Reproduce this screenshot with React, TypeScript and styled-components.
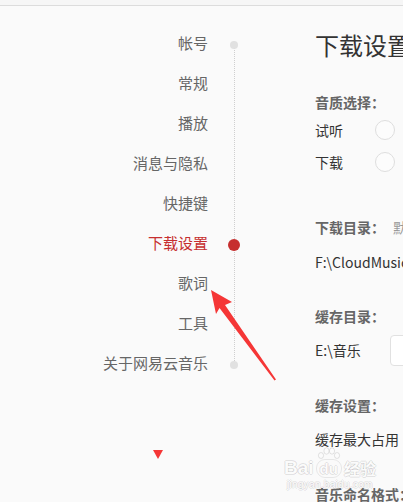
import React from "react";
import styled, { createGlobalStyle } from "styled-components";

const Global = createGlobalStyle`
  html, body { margin: 0; padding: 0; background: #fafafa; overflow: hidden; }
  body { font-family: "Noto Sans CJK SC", "Microsoft YaHei", sans-serif; }
  #root { width: 403px; height: 502px; }
`;

const Page = styled.div`
  position: relative;
  width: 403px;
  height: 502px;
  overflow: hidden;
  background: #fafafa;
`;

const TopBar = styled.div`
  height: 5px;
  background: #f6f6f6;
  border-bottom: 1px solid #dcdcdc;
`;

const Main = styled.div`
  display: flex;
  flex-direction: row;
  align-items: flex-start;
`;

const Nav = styled.nav`
  width: 208px;
  flex: none;
  padding-top: 17px;
  display: flex;
  flex-direction: column;
`;

const NavItem = styled.div<{ $active?: boolean }>`
  height: 40px;
  line-height: 40px;
  text-align: right;
  font-size: 15px;
  color: ${(p) => (p.$active ? "#c62f2f" : "#666")};
  white-space: nowrap;
`;

const Timeline = styled.div`
  position: relative;
  width: 12px;
  flex: none;
  margin-left: 20px;
  margin-top: 19px;
  display: flex;
  flex-direction: column;
  &::before {
    content: "";
    position: absolute;
    left: 5.5px;
    top: 20px;
    bottom: 20px;
    border-left: 1px dotted #cfcfcf;
  }
`;

const Slot = styled.div`
  position: relative;
  height: 40px;
  display: flex;
  align-items: center;
  justify-content: center;
`;

const Dot = styled.span<{ $active?: boolean }>`
  display: block;
  width: ${(p) => (p.$active ? 12 : 8)}px;
  height: ${(p) => (p.$active ? 12 : 8)}px;
  border-radius: 50%;
  background: ${(p) => (p.$active ? "#c62f2f" : "#e1e1e1")};
`;

const Content = styled.section`
  margin-left: 75px;
  padding-top: 23px;
  display: flex;
  flex-direction: column;
  white-space: nowrap;
  flex: none;
  width: 400px;
`;

const Title = styled.h1`
  margin: 0;
  font-size: 24px;
  line-height: 32px;
  font-weight: normal;
  color: #333;
`;

const Label = styled.div<{ $mt: number }>`
  margin-top: ${(p) => p.$mt}px;
  font-size: 14px;
  line-height: 20px;
  font-weight: bold;
  color: #666;
  display: flex;
  align-items: center;
`;

const Hint = styled.span`
  margin-left: 8px;
  font-weight: normal;
  color: #999;
`;

const Text = styled.div<{ $mt: number }>`
  margin-top: ${(p) => p.$mt}px;
  font-size: 14px;
  line-height: 20px;
  color: #333;
`;

const RadioRow = styled.div<{ $mt?: number }>`
  margin-top: ${(p) => p.$mt ?? 0}px;
  height: 32px;
  display: flex;
  align-items: center;
  font-size: 14px;
  color: #333;
`;

const RadioLabel = styled.span`
  width: 60px;
`;

const Radio = styled.span`
  width: 18px;
  height: 18px;
  border-radius: 50%;
  border: 1px solid #dedede;
  background: #fcfcfc;
`;

const DirRow = styled.div`
  margin-top: 8px;
  height: 32px;
  display: flex;
  align-items: center;
  font-size: 14px;
  color: #333;
`;

const DirButton = styled.button`
  margin-left: 29px;
  height: 31px;
  margin-top: 1px;
  padding: 0 14px;
  border: 1px solid #e1e1e1;
  border-radius: 4px;
  background: #fff;
  font-family: inherit;
  font-size: 13px;
  color: #333;
`;

const Overlay = styled.svg`
  position: absolute;
  left: 0;
  top: 0;
  pointer-events: none;
`;

const Watermark = styled.div`
  position: absolute;
  left: 284px;
  top: 447px;
  display: flex;
  flex-direction: column;
  align-items: flex-start;
  pointer-events: none;
  color: #fbfbfb;
  text-shadow: -1px 0 rgba(0, 0, 0, 0.1), 1px 0 rgba(0, 0, 0, 0.1),
    0 -1px rgba(0, 0, 0, 0.1), 0 1px rgba(0, 0, 0, 0.1);
`;

const MarkRow = styled.div`
  display: flex;
  align-items: flex-end;
  font-family: "Liberation Sans", Arial, sans-serif;
  font-weight: bold;
  font-size: 19px;
  line-height: 20px;
`;

const Paw = styled.span`
  position: relative;
  display: flex;
  flex-direction: column;
  align-items: center;
  margin: 0 2px;
`;

const PawToes = styled.svg`
  display: block;
`;

const PawPad = styled.span`
  display: block;
  font-size: 15px;
  line-height: 17px;
  padding: 0 3px;
  border-radius: 9px;
  border: 1px solid rgba(0, 0, 0, 0.08);
`;

const MarkCn = styled.span`
  font-family: "Noto Sans CJK SC", sans-serif;
  font-size: 16px;
`;

const MarkSub = styled.div`
  font-family: "Liberation Sans", Arial, sans-serif;
  font-size: 10px;
  line-height: 11px;
  margin-left: 3px;
  margin-top: 1px;
  letter-spacing: 0.3px;
`;

const navItems = [
  "帐号",
  "常规",
  "播放",
  "消息与隐私",
  "快捷键",
  "下载设置",
  "歌词",
  "工具",
  "关于网易云音乐",
];

export default function App() {
  return (
    <Page>
      <Global />
      <TopBar />
      <Main>
        <Nav>
          {navItems.map((n, i) => (
            <NavItem key={n} $active={i === 5}>
              {n}
            </NavItem>
          ))}
        </Nav>
        <Timeline>
          {navItems.map((n, i) => (
            <Slot key={n}>
              {i === 0 || i === 8 ? <Dot /> : null}
              {i === 5 ? <Dot $active /> : null}
            </Slot>
          ))}
        </Timeline>
        <Content>
          <Title>下载设置</Title>
          <Label $mt={31}>音质选择：</Label>
          <RadioRow $mt={2}>
            <RadioLabel>试听</RadioLabel>
            <Radio />
          </RadioRow>
          <RadioRow>
            <RadioLabel>下载</RadioLabel>
            <Radio />
          </RadioRow>
          <Label $mt={39}>
            下载目录：<Hint>默认将下载到该文件夹</Hint>
          </Label>
          <Text $mt={15}>F:\CloudMusic</Text>
          <Label $mt={34}>缓存目录：</Label>
          <DirRow>
            E:\音乐
            <DirButton>更改目录</DirButton>
          </DirRow>
          <Label $mt={29}>缓存设置：</Label>
          <Text $mt={14}>缓存最大占用</Text>
          <Label $mt={35}>音乐命名格式：</Label>
        </Content>
      </Main>
      <Watermark>
        <MarkRow>
          <span>Bai</span>
          <Paw>
            <PawToes width="24" height="12" viewBox="0 0 24 12">
              <g fill="#fbfbfb" stroke="rgba(0,0,0,0.1)" strokeWidth="1">
                <ellipse cx="4" cy="8.5" rx="2.6" ry="3" />
                <ellipse cx="9.5" cy="4" rx="2.6" ry="3.2" />
                <ellipse cx="15" cy="4" rx="2.6" ry="3.2" />
                <ellipse cx="20" cy="8.5" rx="2.6" ry="3" />
              </g>
            </PawToes>
            <PawPad>du</PawPad>
          </Paw>
          <MarkCn>经验</MarkCn>
        </MarkRow>
        <MarkSub>jingyan.baidu.com</MarkSub>
      </Watermark>
      <Overlay width="403" height="502" viewBox="0 0 403 502">
        <polygon
          points="211,290 232,302 225,305 276,379.5 274.5,380.5 219.5,308 216,314"
          fill="#f53636"
        />
        <polygon points="153,450 163,450 158,459" fill="#f53636" />
      </Overlay>
    </Page>
  );
}
